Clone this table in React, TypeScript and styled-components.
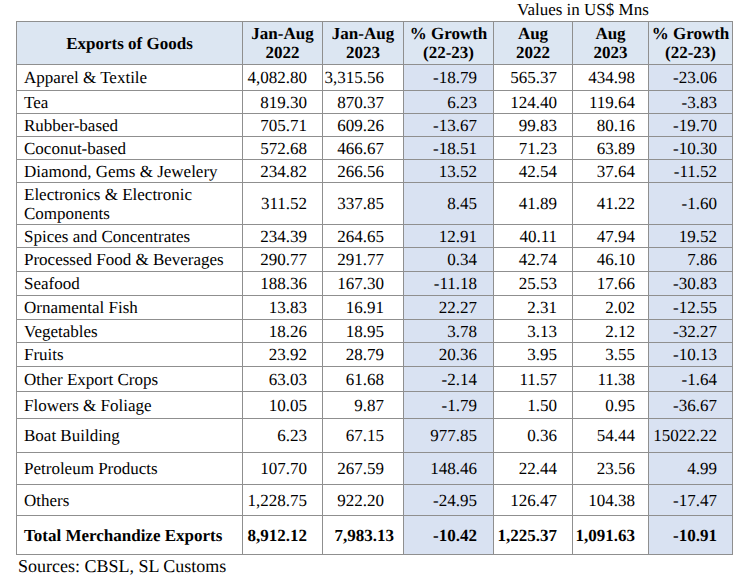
import React from "react";
import styled, { createGlobalStyle } from "styled-components";

const Global = createGlobalStyle`
  html, body { margin: 0; padding: 0; background: #ffffff; }
  body {
    font-family: "Liberation Serif", "Times New Roman", serif;
    color: #000;
    text-rendering: geometricPrecision;
  }
`;

const Page = styled.div`
  width: 750px;
  height: 582px;
  padding-left: 16px;
  box-sizing: border-box;
  font-family: "Liberation Serif", "Times New Roman", serif;
`;

const Units = styled.div`
  height: 21px;
  line-height: 20px;
  font-size: 17px;
  padding-left: 501px;
`;

const Table = styled.table`
  border-collapse: collapse;
  table-layout: fixed;
  width: 716px;
  font-family: "Liberation Serif", "Times New Roman", serif;
  font-size: 17px;
`;

const Col = styled.col<{ $w: number }>`
  width: ${(p) => p.$w}px;
`;

const HeadCell = styled.th`
  box-sizing: border-box;
  height: 43px;
  padding: 0 2px;
  background: #dce6f2;
  border: 1px solid #8f8f8f;
  font-family: "Liberation Serif", "Times New Roman", serif;
  font-size: 17px;
  font-weight: bold;
  text-align: center;
  vertical-align: middle;
  line-height: 19px;
`;

const Row = styled.tr<{ $h: number }>`
  height: ${(p) => p.$h}px;
`;

const Label = styled.td<{ $bold?: boolean }>`
  box-sizing: border-box;
  padding: 0 6px 0 7px;
  border: 1px solid #8f8f8f;
  font-family: "Liberation Serif", "Times New Roman", serif;
  font-size: 17px;
  text-align: left;
  vertical-align: middle;
  line-height: 19px;
  font-weight: ${(p) => (p.$bold ? "bold" : "normal")};
`;

const Num = styled.td<{ $pad: number; $shade?: boolean; $bold?: boolean }>`
  box-sizing: border-box;
  padding: 0 ${(p) => p.$pad}px 0 0;
  border: 1px solid #8f8f8f;
  font-family: "Liberation Serif", "Times New Roman", serif;
  font-size: 17px;
  text-align: right;
  vertical-align: middle;
  line-height: 19px;
  white-space: nowrap;
  background: ${(p) => (p.$shade ? "#d9e2f2" : "#ffffff")};
  font-weight: ${(p) => (p.$bold ? "bold" : "normal")};
`;

const Sources = styled.div`
  font-size: 18px;
  line-height: 22px;
  padding-left: 2px;
`;

type RowData = [string, string, string, string, string, string, string, number];

const rows: RowData[] = [
  ["Apparel & Textile", "4,082.80", "3,315.56", "-18.79", "565.37", "434.98", "-23.06", 26],
  ["Tea", "819.30", "870.37", "6.23", "124.40", "119.64", "-3.83", 23],
  ["Rubber-based", "705.71", "609.26", "-13.67", "99.83", "80.16", "-19.70", 23],
  ["Coconut-based", "572.68", "466.67", "-18.51", "71.23", "63.89", "-10.30", 23],
  ["Diamond, Gems & Jewelery", "234.82", "266.56", "13.52", "42.54", "37.64", "-11.52", 23],
  ["Electronics & Electronic Components", "311.52", "337.85", "8.45", "41.89", "41.22", "-1.60", 42],
  ["Spices and Concentrates", "234.39", "264.65", "12.91", "40.11", "47.94", "19.52", 23],
  ["Processed Food & Beverages", "290.77", "291.77", "0.34", "42.74", "46.10", "7.86", 24],
  ["Seafood", "188.36", "167.30", "-11.18", "25.53", "17.66", "-30.83", 24],
  ["Ornamental Fish", "13.83", "16.91", "22.27", "2.31", "2.02", "-12.55", 24],
  ["Vegetables", "18.26", "18.95", "3.78", "3.13", "2.12", "-32.27", 23],
  ["Fruits", "23.92", "28.79", "20.36", "3.95", "3.55", "-10.13", 24],
  ["Other Export Crops", "63.03", "61.68", "-2.14", "11.57", "11.38", "-1.64", 25],
  ["Flowers & Foliage", "10.05", "9.87", "-1.79", "1.50", "0.95", "-36.67", 27],
  ["Boat Building", "6.23", "67.15", "977.85", "0.36", "54.44", "15022.22", 34],
  ["Petroleum Products", "107.70", "267.59", "148.46", "22.44", "23.56", "4.99", 32],
  ["Others", "1,228.75", "922.20", "-24.95", "126.47", "104.38", "-17.47", 31],
];

const total: RowData = [
  "Total Merchandize Exports", "8,912.12", "7,983.13", "-10.42", "1,225.37", "1,091.63", "-10.91", 39,
];

const widths = [226, 80, 81, 90, 79, 76, 84];
const pads = [15, 19, 16, 15, 13, 15];
const shaded = [false, false, true, false, false, true];

const headers: [string, string][] = [
  ["Jan-Aug", "2022"],
  ["Jan-Aug", "2023"],
  ["% Growth", "(22-23)"],
  ["Aug", "2022"],
  ["Aug", "2023"],
  ["% Growth", "(22-23)"],
];

function DataRow({ r, bold }: { r: RowData; bold?: boolean }) {
  return (
    <Row $h={r[7]}>
      <Label $bold={bold}>{r[0]}</Label>
      {r.slice(1, 7).map((v, i) => (
        <Num
          key={i}
          $pad={bold && i === 1 ? 9 : pads[i]}
          $shade={shaded[i]}
          $bold={bold}
        >
          {v}
        </Num>
      ))}
    </Row>
  );
}

export default function App() {
  return (
    <Page>
      <Global />
      <Units>Values in US$ Mns</Units>
      <Table>
        <colgroup>
          {widths.map((w, i) => (
            <Col key={i} $w={w} />
          ))}
        </colgroup>
        <thead>
          <tr>
            <HeadCell>Exports of Goods</HeadCell>
            {headers.map(([a, b], i) => (
              <HeadCell key={i}>
                {a}
                <br />
                {b}
              </HeadCell>
            ))}
          </tr>
        </thead>
        <tbody>
          {rows.map((r) => (
            <DataRow key={r[0]} r={r} />
          ))}
          <DataRow r={total} bold />
        </tbody>
      </Table>
      <Sources>Sources: CBSL, SL Customs</Sources>
    </Page>
  );
}
